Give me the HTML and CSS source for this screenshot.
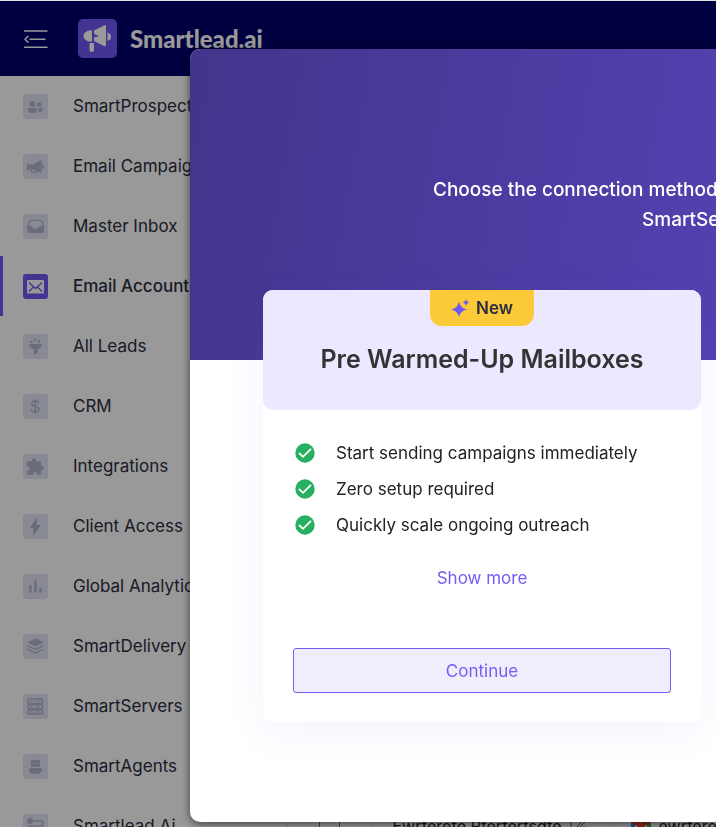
FILE: index.html
```html
<!DOCTYPE html>
<html lang="en">
<head>
  <meta charset="utf-8">
  <meta name="viewport" content="width=device-width, initial-scale=1">
  <title>Smartlead.ai - Email Accounts</title>
  <link rel="stylesheet" href="styles.css">
</head>
<body>
  <div class="app">
    <header class="topbar">
      <button class="menu-toggle" aria-label="Collapse menu">
        <svg width="26" height="20" viewBox="0 0 26 20" fill="none" stroke="#fff" stroke-width="1.5" stroke-linecap="round" stroke-linejoin="round">
          <path d="M1.5 2H24M7 10.200H22M1.500 18.200H24M5 7.200L2 10.200L5 13.200"/>
        </svg>
      </button>
      <a class="brand" href="#">
        <svg class="brand-logo" width="39" height="39" viewBox="0 0 39 39">
          <rect width="39" height="39" rx="5" fill="#6e58f1"/>
          <path fill="#fff" d="M14 11.500V22.500H12C8.500 22.500 5.500 20 5.500 17S8.500 11.500 12 11.500ZM16 11.500L26.500 6.200Q28 5.500 28 7.500V25.500Q28 28 26 27L16 22V18.500L21 17L16 15ZM29.500 13.500Q33 14.500 33 17.800T29.500 22ZM11.500 24H16V30.500Q16 33 13.700 33T11.500 30.500Z"/>
        </svg>
        <span class="brand-name">Smartlead.ai</span>
      </a>
    </header>

    <div class="layout">
      <nav class="sidebar">
        <a class="nav-item" href="#">
          <svg class="nav-icon" viewBox="0 0 25 25"><g fill="#b0b4cd"><circle cx="9.500" cy="10" r="3"/><circle cx="16.200" cy="10.500" r="2.200"/><path d="M6.500 14H13Q14.300 14 14.300 15.300Q14.300 19 9.500 19T4.800 15.300Q4.800 14 6.500 14ZM15.200 14H18.500Q20 14 20 15.500Q20 18.300 15 18.300Q16 16 15.200 14Z"/></g></svg>
          <span>SmartProspect</span>
        </a>
        <a class="nav-item" href="#">
          <svg class="nav-icon" viewBox="0 0 25 25"><path fill="#b0b4cd" d="M4 9.500L6 10.500H10L18.500 6V19L10 15.500H6L4 16.500ZM19 10Q21 11 21 13T19 15.500Z"/><path d="M8 15.500Q8 18.500 11 18.500T14 16.500" fill="none" stroke="#b0b4cd" stroke-width="1.300"/></svg>
          <span>Email Campaigns</span>
        </a>
        <a class="nav-item" href="#">
          <svg class="nav-icon" viewBox="0 0 25 25"><path fill="#b0b4cd" d="M4.500 12H8.500Q10 15 12.500 15T16.500 12H21V16.500Q21 19 18.500 19H6.500Q4.500 19 4.500 16.500Z"/><path d="M4.700 12.500L6.700 7.500Q7.200 6.300 8.500 6.300H17Q18.300 6.300 18.800 7.500L20.600 12.500" fill="none" stroke="#b0b4cd" stroke-width="1.200"/></svg>
          <span>Master Inbox</span>
        </a>
        <a class="nav-item active" href="#">
          <svg class="nav-icon" viewBox="0 0 25 25"><rect x="4" y="6" width="17" height="13.500" rx="1" fill="#fff"/><path d="M6 8.500L12.500 14.500L19 8.500M6 17.500L10.500 13M19 17.500L14.500 13" fill="none" stroke="#6e58f1" stroke-width="1.300"/></svg>
          <span>Email Accounts</span>
        </a>
        <a class="nav-item" href="#">
          <svg class="nav-icon" viewBox="0 0 25 25"><g fill="#b0b4cd"><path d="M6 11Q6 10 7 10H18Q19 10 19 11Q19 13 14.500 15.500V18.500L11 20.500V15.500Q6 13 6 11Z"/><circle cx="12" cy="5.500" r="1.300"/><circle cx="8.500" cy="7.800" r="1.400"/><circle cx="15.800" cy="7.500" r="1.500"/></g></svg>
          <span>All Leads</span>
        </a>
        <a class="nav-item" href="#">
          <svg class="nav-icon" viewBox="0 0 25 25"><path d="M15.700 9.300Q15.500 7 12.200 7T8.500 9.600Q8.500 11.800 12.200 12.400T16 15.200Q16 18 12.200 18T8.200 15.400M12.200 5V20" fill="none" stroke="#b0b4cd" stroke-width="1.300"/></svg>
          <span>CRM</span>
        </a>
        <a class="nav-item" href="#">
          <svg class="nav-icon" viewBox="0 0 25 25"><path fill="#b0b4cd" d="M5.500 7H9V6.500Q9 4.300 11 4.300T13 6.500V7H16.500Q18 7 18 8.500V12H18.800Q21 12 21 14T18.800 16H18V19.500Q18 21 16.500 21H14V20Q14 18 12 18T10 20V21H5.500Q4 21 4 19.500V16.500H5Q7 16.500 7 14.500T5 12.500H4V8.500Q4 7 5.500 7Z"/></svg>
          <span>Integrations</span>
        </a>
        <a class="nav-item" href="#">
          <svg class="nav-icon" viewBox="0 0 25 25"><path fill="#b0b4cd" stroke="#b0b4cd" stroke-linejoin="round" d="M13.500 5L7.500 13.500H11L10.500 20.500L17 11.500H13.300Z"/></svg>
          <span>Client Access</span>
        </a>
        <a class="nav-item" href="#">
          <svg class="nav-icon" viewBox="0 0 25 25"><path d="M7.400 12.500V17.500M12.500 7.500V17.500M17.500 15V17.500" fill="none" stroke="#b0b4cd" stroke-width="2.400" stroke-linecap="round"/></svg>
          <span>Global Analytics</span>
        </a>
        <a class="nav-item" href="#">
          <svg class="nav-icon" viewBox="0 0 25 25"><path fill="#b0b4cd" d="M12.500 4.500L20.500 8.500L12.500 12.500L4.500 8.500Z"/><path d="M4.500 11.500L12.500 15.500L20.500 11.500M4.500 15L12.500 19.300L20.500 15" fill="none" stroke="#b0b4cd" stroke-width="1.300"/></svg>
          <span>SmartDelivery</span>
        </a>
        <a class="nav-item" href="#">
          <svg class="nav-icon" viewBox="0 0 25 25"><g fill="none" stroke="#b0b4cd" stroke-width="1.500"><rect x="5" y="5" width="14.500" height="4.500" rx="1"/><rect x="5" y="10.700" width="14.500" height="4" rx="1"/><rect x="5" y="16" width="14.500" height="4" rx="1"/><path d="M7 7.200H10M12 7.200H17M7 12.700H10M12 12.700H17M7 18H10M12 18H17" stroke-width="1"/></g></svg>
          <span>SmartServers</span>
        </a>
        <a class="nav-item" href="#">
          <svg class="nav-icon" viewBox="0 0 25 25"><path fill="#b0b4cd" d="M8 7Q8 6 9 6H12V5H13V6H16Q17 6 17 7V12Q17 13 16 13H9Q8 13 8 12ZM8 14H17Q19 14 19 15.500Q19 20 12.500 20T6 15.500Q6 14 8 14Z"/><path stroke="#e3e4f3" stroke-width="1.200" d="M10 9.500H11.500M14 9.500H15.500"/></svg>
          <span>SmartAgents</span>
        </a>
        <a class="nav-item" href="#">
          <svg class="nav-icon" viewBox="0 0 25 25"><circle cx="7" cy="7" r="3" fill="#b0b4cd"/><path d="M9 7H17.500Q20 7 20 9.500T17.500 12H8Q5 12 5 15T8 18H18" fill="none" stroke="#b0b4cd" stroke-width="1.400"/></svg>
          <span>Smartlead.Ai</span>
        </a>
      </nav>

      <main class="content">
        <table class="accounts">
          <tr>
            <td class="cell-check"><input type="checkbox" aria-label="Select account"></td>
            <td class="cell-name">
              <div class="cell-row">
                <span>Ewrferefe Rferferfsdfe</span>
                <svg width="16" height="16" viewBox="0 0 16 16" fill="none" stroke="#555"><path d="M1 1V15H14V8M5 11L13 2L15 4L7 12Z"/></svg>
              </div>
            </td>
            <td class="cell-email">
              <div class="cell-row">
                <svg width="20" height="16" viewBox="0 0 20 16"><path fill="#4285f4" d="M0 2V16H4V4Z"/><path fill="#34a853" d="M20 2V16H16V4Z"/><path fill="#ea4335" d="M0 1L4 0L10 5L16 0L20 1V4L10 11L0 4Z"/></svg>
                <span>ewrferefe</span>
              </div>
            </td>
          </tr>
        </table>
      </main>
    </div>
  </div>

  <div class="backdrop"></div>

  <section class="modal" role="dialog" aria-modal="true" aria-label="Choose the connection method">
    <div class="hero">
      <p class="hero-text">Choose the connection method</p>
      <p class="hero-text hero-text-second">SmartServers</p>
    </div>

    <article class="card">
      <div class="card-head">
        <span class="badge">
          <svg width="19" height="19" viewBox="0 0 19 19" fill="#6e58f1"><path d="M8 2.500Q9 9 16 10.500Q9 12 8 18.500Q7 12 0 10.500Q7 9 8 2.500ZM15 0Q15.500 3 18 3.500Q15.500 4 15 7Q14.500 4 12 3.500Q14.500 3 15 0Z"/></svg>
          New
        </span>
        <h2 class="card-title">Pre Warmed-Up Mailboxes</h2>
      </div>
      <div class="card-body">
        <ul class="features">
          <li>
            <svg class="check" viewBox="0 0 20 20"><circle cx="10" cy="10" r="9.700" fill="#27ae60"/><path d="M4 10L8 13.800L16 5.800" fill="none" stroke="#fff" stroke-width="1.800"/></svg>
            Start sending campaigns immediately
          </li>
          <li>
            <svg class="check" viewBox="0 0 20 20"><circle cx="10" cy="10" r="9.700" fill="#27ae60"/><path d="M4 10L8 13.800L16 5.800" fill="none" stroke="#fff" stroke-width="1.800"/></svg>
            Zero setup required
          </li>
          <li>
            <svg class="check" viewBox="0 0 20 20"><circle cx="10" cy="10" r="9.700" fill="#27ae60"/><path d="M4 10L8 13.800L16 5.800" fill="none" stroke="#fff" stroke-width="1.800"/></svg>
            Quickly scale ongoing outreach
          </li>
        </ul>
        <button class="show-more">Show more</button>
        <button class="continue">Continue</button>
      </div>
    </article>
  </section>
</body>
</html>
```

FILE: styles.css
```css
* {
  box-sizing: border-box;
}

body {
  margin: 0;
  padding-top: 1px;
  background: #dfe3e6;
  font-family: Inter, "Open Sans", sans-serif;
  font-size: 17px;
  color: #2b2d42;
  overflow: hidden;
}

button {
  font: inherit;
  cursor: pointer;
}

a {
  color: inherit;
  text-decoration: none;
}

/* page behind the modal */
.app {
  height: calc(100vh - 1px);
  overflow: hidden;
  background: #fff;
}

.topbar {
  display: flex;
  align-items: center;
  gap: 29px;
  height: 75px;
  padding-left: 23px;
  background: #00006c;
}

.menu-toggle {
  display: flex;
  padding: 0;
  border: none;
  background: none;
}

.brand {
  display: flex;
  align-items: center;
  gap: 13px;
}

.brand-name {
  font-family: Lato, sans-serif;
  font-size: 24px;
  font-weight: 900;
  color: #fff;
}

.layout {
  display: flex;
}

.sidebar {
  flex: none;
  width: 288px;
  border-right: 1px solid #e4e4ea;
}

.nav-item {
  display: flex;
  align-items: center;
  gap: 25px;
  height: 60px;
  padding-left: 20px;
  border-left: 3px solid transparent;
  white-space: nowrap;
}

.nav-item.active {
  border-left-color: #6e58f1;
  font-weight: 500;
}

.nav-icon {
  flex: none;
  width: 25px;
  height: 25px;
  border-radius: 3px;
  background: #e3e4f3;
}

.nav-item.active .nav-icon {
  background: #6e58f1;
}

.content {
  flex: 1;
  padding-top: 720px;
}

.accounts {
  width: 100%;
  border-collapse: collapse;
  table-layout: fixed;
  white-space: nowrap;
  font-size: 16px;
  color: #222;
}

.accounts td {
  height: 60px;
  padding: 0 0 0 20px;
  border-right: 1px solid #e4e4ea;
}

.accounts .cell-check {
  width: 84px;
  padding-left: 31px;
}

.cell-check input {
  display: block;
  width: 21px;
  height: 21px;
  margin: 0;
}

.cell-name {
  width: 238px;
}

.cell-row {
  display: flex;
  align-items: center;
  gap: 8px;
}

.cell-row svg {
  flex: none;
}

.backdrop {
  position: fixed;
  inset: 1px 0 0 0;
  background: rgba(0, 0, 0, 0.4);
}

/* modal */
.modal {
  position: absolute;
  top: 49px;
  left: 190px;
  right: 0;
  padding-bottom: 100px;
  overflow: hidden;
  border-radius: 10px 0 0 10px;
  background: #fff;
  box-shadow: 0 2px 8px rgba(0, 0, 0, 0.6);
}

.hero {
  height: 311px;
  padding: 126px 0 0 243px;
  background: linear-gradient(100deg, #43348b, #5341b0);
}

.hero-text {
  margin: 0;
  font-size: 19px;
  font-weight: 500;
  line-height: 30px;
  color: #fff;
  white-space: nowrap;
}

.hero-text-second {
  padding-left: 209px;
}

.card {
  margin: -70px 15px 0 73px;
  border-radius: 10px;
  background: #fff;
  box-shadow: 0 10px 40px rgba(110, 88, 241, 0.07);
}

.card-head {
  display: flex;
  flex-direction: column;
  align-items: center;
  gap: 16px;
  height: 120px;
  border-radius: 10px;
  background: #ece8ff;
}

.badge {
  display: flex;
  align-items: center;
  justify-content: center;
  gap: 6px;
  width: 104px;
  height: 36px;
  border-radius: 0 0 12px 12px;
  background: #fcca38;
  font-weight: 600;
}

.card-title {
  margin: 0;
  font-size: 25px;
  font-weight: 600;
  line-height: 34px;
  color: #333;
}

.card-body {
  display: flex;
  flex-direction: column;
  padding: 25px 30px 29px;
}

.features {
  margin: 0;
  padding: 0 0 0 2px;
  list-style: none;
  color: #222;
}

.features li {
  display: flex;
  align-items: center;
  gap: 21px;
  height: 36px;
  white-space: nowrap;
}

.check {
  flex: none;
  width: 20px;
  height: 20px;
}

.show-more {
  align-self: center;
  height: 30px;
  margin: 20px 0 55px;
  padding: 0;
  border: none;
  background: none;
  color: #755cf5;
}

.continue {
  height: 45px;
  border: 1px solid #755cf5;
  border-radius: 3px;
  background: #f0eefc;
  color: #755cf5;
}
```
